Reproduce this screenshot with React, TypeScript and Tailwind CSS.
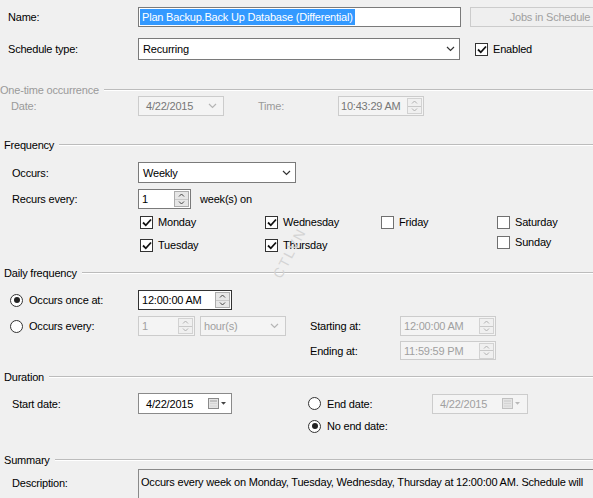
import React from 'react'

const enabledBorder = 'border-[#7a7a7a]'
const disabledBorder = 'border-[#cccccc]'

function Chevron({ disabled }: { disabled?: boolean }) {
  return (
    <svg width="9" height="6" viewBox="0 0 9 6" className="shrink-0">
      <path d="M1 1 L4.5 4.5 L8 1" fill="none" stroke={disabled ? '#b5b5b5' : '#333'} strokeWidth="1.2" />
    </svg>
  )
}

function Spinner({ disabled }: { disabled?: boolean }) {
  const c = disabled ? '#b0b0b0' : '#444'
  return (
    <div
      className={`mr-px h-[16px] w-[15px] shrink-0 flex flex-col border ${
        disabled ? 'border-[#d2d2d2] bg-[#f0f0f0]' : 'border-[#acacac] bg-[#e6e6e6]'
      }`}
    >
      <div className="flex-1 flex items-center justify-center border-b border-[#c8c8c8]">
        <svg width="7" height="4" viewBox="0 0 7 4">
          <path d="M1 3.5 L3.5 1 L6 3.5" fill="none" stroke={c} strokeWidth="1" />
        </svg>
      </div>
      <div className="flex-1 flex items-center justify-center">
        <svg width="7" height="4" viewBox="0 0 7 4">
          <path d="M1 0.5 L3.5 3 L6 0.5" fill="none" stroke={c} strokeWidth="1" />
        </svg>
      </div>
    </div>
  )
}

function CalendarIcon({ disabled }: { disabled?: boolean }) {
  const c = disabled ? '#c0c0c0' : '#8a8a8a'
  return (
    <svg width="20" height="11" viewBox="0 0 20 11" className="shrink-0">
      <rect x="0.5" y="0.5" width="10" height="10" fill="#e4e4e4" stroke={c} />
      <line x1="2" y1="3" x2="9" y2="3" stroke={c} strokeWidth="0.8" />
      <line x1="2" y1="5.5" x2="9" y2="5.5" stroke="#d0d0d0" strokeWidth="0.8" />
      <line x1="2" y1="8" x2="9" y2="8" stroke="#d0d0d0" strokeWidth="0.8" />
      <path d="M13 4 L18 4 L15.5 6.8 Z" fill={disabled ? '#b8b8b8' : '#444'} />
    </svg>
  )
}

function CheckBox({ checked, label }: { checked?: boolean; label: string }) {
  return (
    <div className="flex items-center h-[16px]">
      <div
        className={`w-[13px] h-[13px] shrink-0 bg-white border flex items-center justify-center ${
          checked ? 'border-[#333333]' : 'border-[#707070]'
        }`}
      >
        {checked && (
          <svg width="10" height="9" viewBox="0 0 10 9">
            <path d="M1 4.5 L3.8 7.3 L9 1.5" fill="none" stroke="#111" strokeWidth="1.8" />
          </svg>
        )}
      </div>
      <span className="ml-[5px]">{label}</span>
    </div>
  )
}

function Radio({ checked, label }: { checked?: boolean; label: string }) {
  return (
    <div className="flex items-center h-[14px]">
      <div className="w-[13px] h-[13px] shrink-0 rounded-full border border-[#333333] bg-white flex items-center justify-center">
        {checked && <div className="w-[6px] h-[6px] rounded-full bg-[#222222]" />}
      </div>
      <span className="ml-[6px]">{label}</span>
    </div>
  )
}

function GroupHeader({ title, disabled, indent }: { title: string; disabled?: boolean; indent: string }) {
  return (
    <div className={`flex items-center h-[12px] ${indent}`}>
      <span className={disabled ? 'text-[#9a9a9a]' : 'text-black'}>{title}</span>
      <div className="flex-1 ml-[5px] border-t border-t-[#bcbcbc] border-b border-b-white" />
    </div>
  )
}

export default function App() {
  return (
    <div className="relative w-[593px] h-[498px] overflow-hidden bg-[#f0f0f0] text-[11px] leading-[14px] tracking-[-0.2px] text-black font-['Liberation_Sans',Arial,sans-serif]">
      {/* Name */}
      <div className="flex items-center mt-[7px] h-[20px]">
        <div className="w-[138px] shrink-0 pl-[8px]">Name:</div>
        <div className={`w-[323px] shrink-0 h-full bg-white border ${enabledBorder} flex items-center pl-px`}>
          <span className="bg-[#3399ff] text-white px-[2px] h-[16px] flex items-center">
            Plan Backup.Back Up Database (Differential)
          </span>
        </div>
        <div className="ml-[9px] w-[160px] shrink-0 h-full border border-[#cccccc] bg-[#efefef] text-[#a0a0a0] flex items-center justify-center">
          Jobs in Schedule
        </div>
      </div>

      {/* Schedule type */}
      <div className="flex items-center mt-[11px] h-[22px]">
        <div className="w-[138px] shrink-0 pl-[8px]">Schedule type:</div>
        <div className={`w-[322px] shrink-0 h-full bg-white border ${enabledBorder} flex items-center justify-between pl-[4px] pr-[4px]`}>
          <span>Recurring</span>
          <Chevron />
        </div>
        <div className="ml-[15px]">
          <CheckBox checked label="Enabled" />
        </div>
      </div>

      {/* One-time occurrence */}
      <div className="mt-[24px]">
        <GroupHeader title="One-time occurrence" disabled indent="pl-0" />
      </div>
      <div className="flex items-center h-[20px] text-[#9a9a9a]">
        <div className="w-[138px] shrink-0 pl-[11px]">Date:</div>
        <div className={`w-[86px] shrink-0 h-full border ${disabledBorder} bg-[#f4f4f4] flex items-center justify-between pl-[7px] pr-[6px] text-[#777777]`}>
          <span>4/22/2015</span>
          <Chevron disabled />
        </div>
        <div className="ml-[34px] w-[80px] shrink-0">Time:</div>
        <div className={`w-[86px] shrink-0 h-full border ${disabledBorder} bg-[#f4f4f4] flex items-center justify-between pl-[2px] text-[#777777]`}>
          <span>10:43:29 AM</span>
          <Spinner disabled />
        </div>
      </div>

      {/* Frequency */}
      <div className="mt-[23px]">
        <GroupHeader title="Frequency" indent="pl-[4px]" />
      </div>
      <div className="flex items-center mt-[11px] h-[21px]">
        <div className="w-[138px] shrink-0 pl-[12px]">Occurs:</div>
        <div className={`w-[158px] shrink-0 h-full bg-white border ${enabledBorder} flex items-center justify-between pl-[4px] pr-[4px]`}>
          <span>Weekly</span>
          <Chevron />
        </div>
      </div>
      <div className="flex items-center mt-[6px] h-[20px]">
        <div className="w-[138px] shrink-0 pl-[12px]">Recurs every:</div>
        <div className={`w-[53px] shrink-0 h-full bg-white border ${enabledBorder} flex items-center justify-between pl-[3px]`}>
          <span>1</span>
          <Spinner />
        </div>
        <span className="ml-[9px]">week(s) on</span>
      </div>
      <div className="flex mt-[5px] ml-[140px] h-[39px]">
        <div className="w-[125px] shrink-0 flex flex-col gap-[7px]">
          <CheckBox checked label="Monday" />
          <CheckBox checked label="Tuesday" />
        </div>
        <div className="w-[116px] shrink-0 flex flex-col gap-[7px]">
          <CheckBox checked label="Wednesday" />
          <CheckBox checked label="Thursday" />
        </div>
        <div className="w-[116px] shrink-0 flex flex-col">
          <CheckBox label="Friday" />
        </div>
        <div className="shrink-0 flex flex-col gap-[4px]">
          <CheckBox label="Saturday" />
          <CheckBox label="Sunday" />
        </div>
      </div>

      {/* Daily frequency */}
      <div className="mt-[14px]">
        <GroupHeader title="Daily frequency" indent="pl-[4px]" />
      </div>
      <div className="flex items-center mt-[11px] h-[20px]">
        <div className="w-[138px] shrink-0 pl-[10px]">
          <Radio checked label="Occurs once at:" />
        </div>
        <div className="w-[94px] shrink-0 h-full bg-white border border-[#333333] flex items-center justify-between pl-[3px]">
          <span>12:00:00 AM</span>
          <Spinner />
        </div>
      </div>
      <div className="flex items-center mt-[6px] h-[20px]">
        <div className="w-[138px] shrink-0 pl-[10px]">
          <Radio label="Occurs every:" />
        </div>
        <div className={`w-[57px] shrink-0 h-full border ${disabledBorder} bg-[#f4f4f4] text-[#a0a0a0] flex items-center justify-between pl-[3px]`}>
          <span>1</span>
          <Spinner disabled />
        </div>
        <div className={`ml-[5px] w-[86px] shrink-0 h-full border ${disabledBorder} bg-[#f4f4f4] text-[#a0a0a0] flex items-center justify-between pl-[3px] pr-[6px]`}>
          <span>hour(s)</span>
          <Chevron disabled />
        </div>
        <div className="ml-[24px] w-[90px] shrink-0">Starting at:</div>
        <div className={`w-[96px] shrink-0 h-full border ${disabledBorder} bg-[#f4f4f4] text-[#a0a0a0] flex items-center justify-between pl-[3px]`}>
          <span>12:00:00 AM</span>
          <Spinner disabled />
        </div>
      </div>
      <div className="flex items-center mt-[5px] h-[19px] ml-[310px]">
        <div className="w-[90px] shrink-0">Ending at:</div>
        <div className={`w-[96px] shrink-0 h-full border ${disabledBorder} bg-[#f4f4f4] text-[#a0a0a0] flex items-center justify-between pl-[3px]`}>
          <span>11:59:59 PM</span>
          <Spinner disabled />
        </div>
      </div>

      {/* Duration */}
      <div className="mt-[11px]">
        <GroupHeader title="Duration" indent="pl-[4px]" />
      </div>
      <div className="flex items-center mt-[10px] h-[21px]">
        <div className="w-[138px] shrink-0 pl-[12px]">Start date:</div>
        <div className="w-[94px] shrink-0 h-full bg-white border border-[#8a8a8a] flex items-center justify-between pl-[7px] pr-[3px]">
          <span>4/22/2015</span>
          <CalendarIcon />
        </div>
        <div className="ml-[76px] w-[124px] shrink-0">
          <Radio label="End date:" />
        </div>
        <div className={`w-[96px] shrink-0 h-[20px] border ${disabledBorder} bg-[#f4f4f4] text-[#a0a0a0] flex items-center justify-between pl-[7px] pr-[5px]`}>
          <span>4/22/2015</span>
          <CalendarIcon disabled />
        </div>
      </div>
      <div className="mt-[5px] ml-[308px]">
        <Radio checked label="No end date:" />
      </div>

      {/* Summary */}
      <div className="mt-[21px]">
        <GroupHeader title="Summary" indent="pl-[4px]" />
      </div>
      <div className="flex mt-[3px] h-[40px]">
        <div className="w-[138px] shrink-0 pl-[12px] pt-[7px]">Description:</div>
        <div className="w-[458px] shrink-0 border border-[#8a8a8a] bg-[#f0f0f0] pl-[2px] pr-[2px] pt-[5px]">
          <div className="h-[15px] overflow-hidden">
            Occurs every week on Monday, Tuesday, Wednesday, Thursday at 12:00:00 AM. Schedule will be used starting on 4/22/2015.
          </div>
        </div>
      </div>

      {/* watermark */}
      <span className="absolute left-[262px] top-[246px] -rotate-[62deg] text-[14px] tracking-[2px] text-[#d4d4d4] select-none pointer-events-none">
        CTLVN
      </span>
    </div>
  )
}
